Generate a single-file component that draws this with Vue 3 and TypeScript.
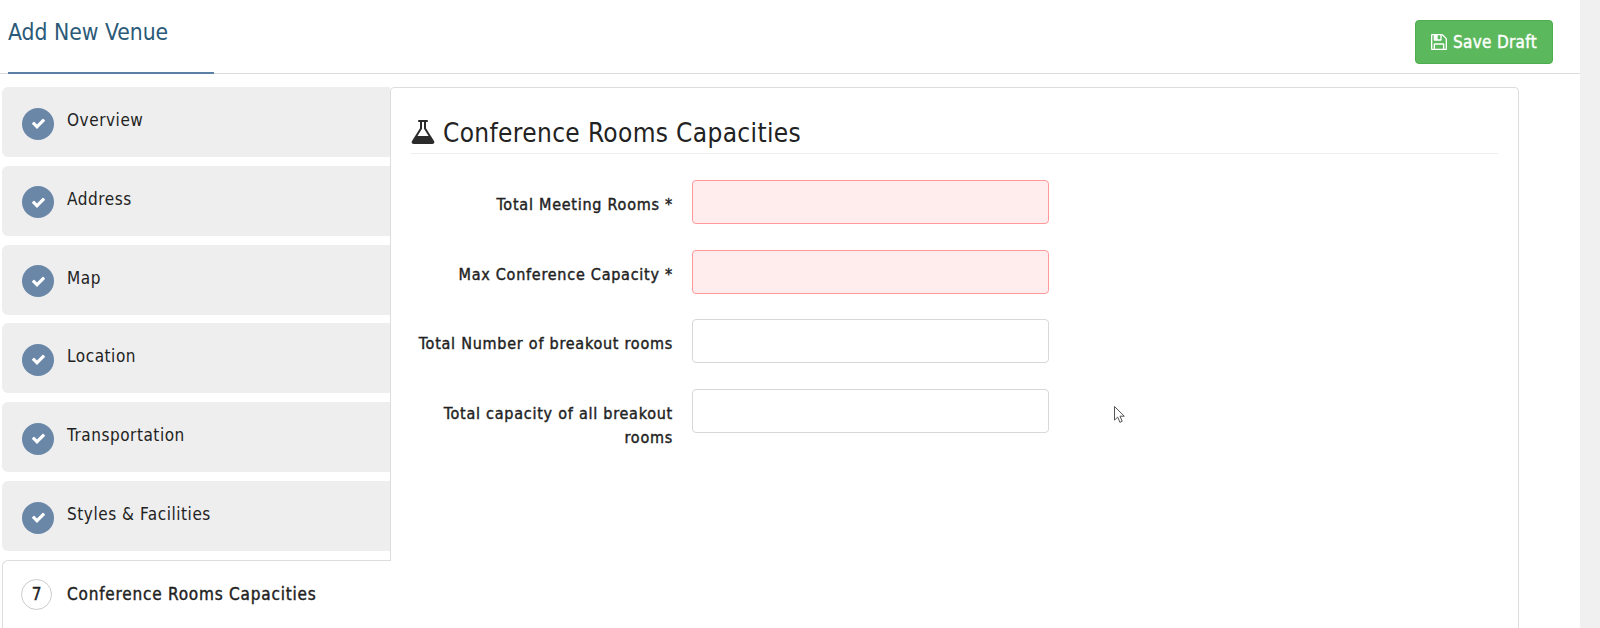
<template>
  <div class="page">
    <div class="content">
      <header class="topbar">
        <h1 class="title">Add New Venue</h1>
        <button class="save" type="button">
          <svg class="save-icon" viewBox="128 128 1536 1536"><path fill="currentColor" :d="icons.save" /></svg>
          Save Draft
        </button>
      </header>
      <div class="wizard">
        <nav class="steps">
          <div v-for="step in doneSteps" :key="step" class="step">
            <span class="badge">
              <svg viewBox="0 0 1792 1792"><path fill="#fff" :d="icons.check" /></svg>
            </span>
            <span class="step-name">{{ step }}</span>
          </div>
          <div class="step active">
            <span class="badge number">7</span>
            <span class="step-name">Conference Rooms Capacities</span>
          </div>
        </nav>
        <section class="panel">
          <h2 class="heading">
            <svg class="flask" viewBox="128 128 1536 1536"><path fill="#2b2b2b" :d="icons.flask" /></svg>
            Conference Rooms Capacities
          </h2>
          <div class="fields">
            <div v-for="field in fields" :key="field.label" class="field">
              <label class="label">{{ field.label }}</label>
              <input class="input" :class="{ invalid: field.required }" type="text" />
            </div>
          </div>
          <svg class="cursor" viewBox="0 0 12 18"><path d="M.5.5v13.6l3.2-3 2.2 5.2 2.300-1-2.200-5.100h4.300z" fill="#fff" stroke="#555" stroke-width="1" /></svg>
        </section>
      </div>
    </div>
    <div class="scrollbar"></div>
  </div>
</template>

<script setup lang="ts">
const doneSteps: string[] = [
  "Overview",
  "Address",
  "Map",
  "Location",
  "Transportation",
  "Styles & Facilities",
];

const fields: { label: string; required: boolean }[] = [
  { label: "Total Meeting Rooms *", required: true },
  { label: "Max Conference Capacity *", required: true },
  { label: "Total Number of breakout rooms", required: false },
  { label: "Total capacity of all breakout rooms", required: false },
];

const icons = {
  check:
    "M1671 566q0 40-28 68l-724 724-136 136q-28 28-68 28t-68-28l-136-136-362-362q-28-28-28-68t28-68l136-136q28-28 68-28t68 28l294 295 656-657q28-28 68-28t68 28l136 136q28 28 28 68z",
  save:
    "M512 1536h768v-384h-768v384zm896 0h128v-896q0-14-10-38.500t-20-34.500l-281-281q-10-10-34-20t-39-10v416q0 40-28 68t-68 28h-576q-40 0-68-28t-28-68v-416h-128v1280h128v-416q0-40 28-68t68-28h832q40 0 68 28t28 68v416zm-384-928v-320q0-13-9.500-22.500t-22.500-9.500h-192q-13 0-22.500 9.500t-9.500 22.500v320q0 13 9.500 22.500t22.500 9.500h192q13 0 22.500-9.500t9.500-22.500zm640 32v928q0 40-28 68t-68 28h-1344q-40 0-68-28t-28-68v-1344q0-40 28-68t68-28h928q40 0 88 20t76 48l280 280q28 28 48 76t20 88z",
  flask:
    "M1591 1448q56 89 21.500 152.500t-140.500 63.500h-1152q-106 0-140.500-63.500t21.500-152.500l503-793v-399h-64q-26 0-45-19t-19-45 19-45 45-19h512q26 0 45 19t19 45-19 45-45 19h-64v399zm-779-725l-272 429h712l-272-429-20-31v-436h-128v436z",
};
</script>

<style>
html,
body {
  height: 628px;
  overflow: hidden;
  background: #fff;
}
</style>

<style scoped>
.page {
  display: flex;
  height: 628px;
  overflow: hidden;
  font-family: "DejaVu Sans", Verdana, sans-serif;
  font-stretch: condensed;
  font-size: 17px;
  letter-spacing: 0.55px;
  color: #222;
}

.content {
  flex: 1;
  min-width: 0;
}

.scrollbar {
  width: 20px;
  background: #f0f0f0;
}

.topbar {
  display: flex;
  justify-content: space-between;
  height: 74px;
  padding: 20px 27px 0 8px;
  box-sizing: border-box;
  border-bottom: 1px solid #ddd;
  position: relative;
}

.topbar::after {
  content: "";
  position: absolute;
  left: 8px;
  bottom: -1px;
  width: 206px;
  height: 2px;
  background: #5a80a6;
}

.title {
  margin: 0;
  font-size: 22.7px;
  font-weight: 400;
  line-height: 24px;
  letter-spacing: 0;
  color: #2a5a78;
}

.save {
  display: flex;
  align-items: center;
  justify-content: center;
  gap: 6px;
  width: 138px;
  height: 44px;
  padding: 0;
  font: inherit;
  font-stretch: condensed;
  font-size: 17px;
  letter-spacing: 0.3px;
  -webkit-text-stroke: 0.4px #fff;
  color: #fff;
  background: #5cb85c;
  border: 1px solid #4cae4c;
  border-radius: 4px;
}

.save-icon {
  width: 16px;
  height: 16px;
}

.wizard {
  display: flex;
  align-items: flex-start;
  padding: 13px 0 0 2px;
}

.steps {
  position: relative;
  z-index: 1;
  display: flex;
  flex-direction: column;
  gap: 8.83px;
  width: 389px;
  margin-right: -1px;
  flex-shrink: 0;
}

.step {
  display: flex;
  align-items: center;
  gap: 13px;
  height: 70px;
  padding: 3px 0 0 20px;
  box-sizing: border-box;
  background: #eee;
  border-radius: 6px 0 0 6px;
  margin-right: 1px;
}

.step-name {
  margin-top: -7px;
}

.step.active {
  height: 90px;
  margin-right: 0;
  padding: 0 0 22px 18px;
  background: #fff;
  border: 1px solid #ddd;
  border-right: 0;
  border-bottom: 0;
  border-radius: 6px 0 0 0;
  -webkit-text-stroke: 0.4px #222;
  letter-spacing: 0.8px;
  gap: 15px;
}

.step.active .step-name {
  margin-top: 0;
}

.badge {
  display: flex;
  align-items: center;
  justify-content: center;
  width: 32px;
  height: 32px;
  border-radius: 50%;
  background: #6a87a8;
  flex-shrink: 0;
}

.badge svg {
  width: 15px;
  height: 15px;
}

.badge.number {
  box-sizing: border-box;
  width: 31px;
  height: 31px;
  letter-spacing: 0;
  background: #fff;
  border: 1px solid #ccc;
}

.panel {
  position: relative;
  width: 1129px;
  height: 600px;
  padding: 25px 20px 0;
  box-sizing: border-box;
  flex-shrink: 0;
  background: #fff;
  border: 1px solid #ddd;
  border-radius: 4px;
}

.heading {
  display: flex;
  align-items: center;
  gap: 8px;
  height: 40px;
  margin: 0;
  font-size: 26px;
  font-weight: 400;
  letter-spacing: 0.35px;
  border-bottom: 1px solid #eee;
}

.flask {
  width: 24px;
  height: 24px;
  margin-top: -2px;
}

.fields {
  display: flex;
  flex-direction: column;
  gap: 25.7px;
  padding-top: 26px;
}

.field {
  display: grid;
  grid-template-columns: 262px 357px;
  column-gap: 19px;
  align-items: start;
}

.label {
  padding-top: 13px;
  font-size: 16px;
  line-height: 24px;
  letter-spacing: 0.75px;
  -webkit-text-stroke: 0.4px #222;
  text-align: right;
}

.input {
  height: 44px;
  box-sizing: border-box;
  background: #fff;
  border: 1px solid #d8d8d8;
  border-radius: 4px;
  outline: none;
}

.input.invalid {
  background: #ffeded;
  border-color: #f99;
}

.cursor {
  position: absolute;
  left: 723px;
  top: 318px;
  width: 12px;
  height: 18px;
}
</style>
